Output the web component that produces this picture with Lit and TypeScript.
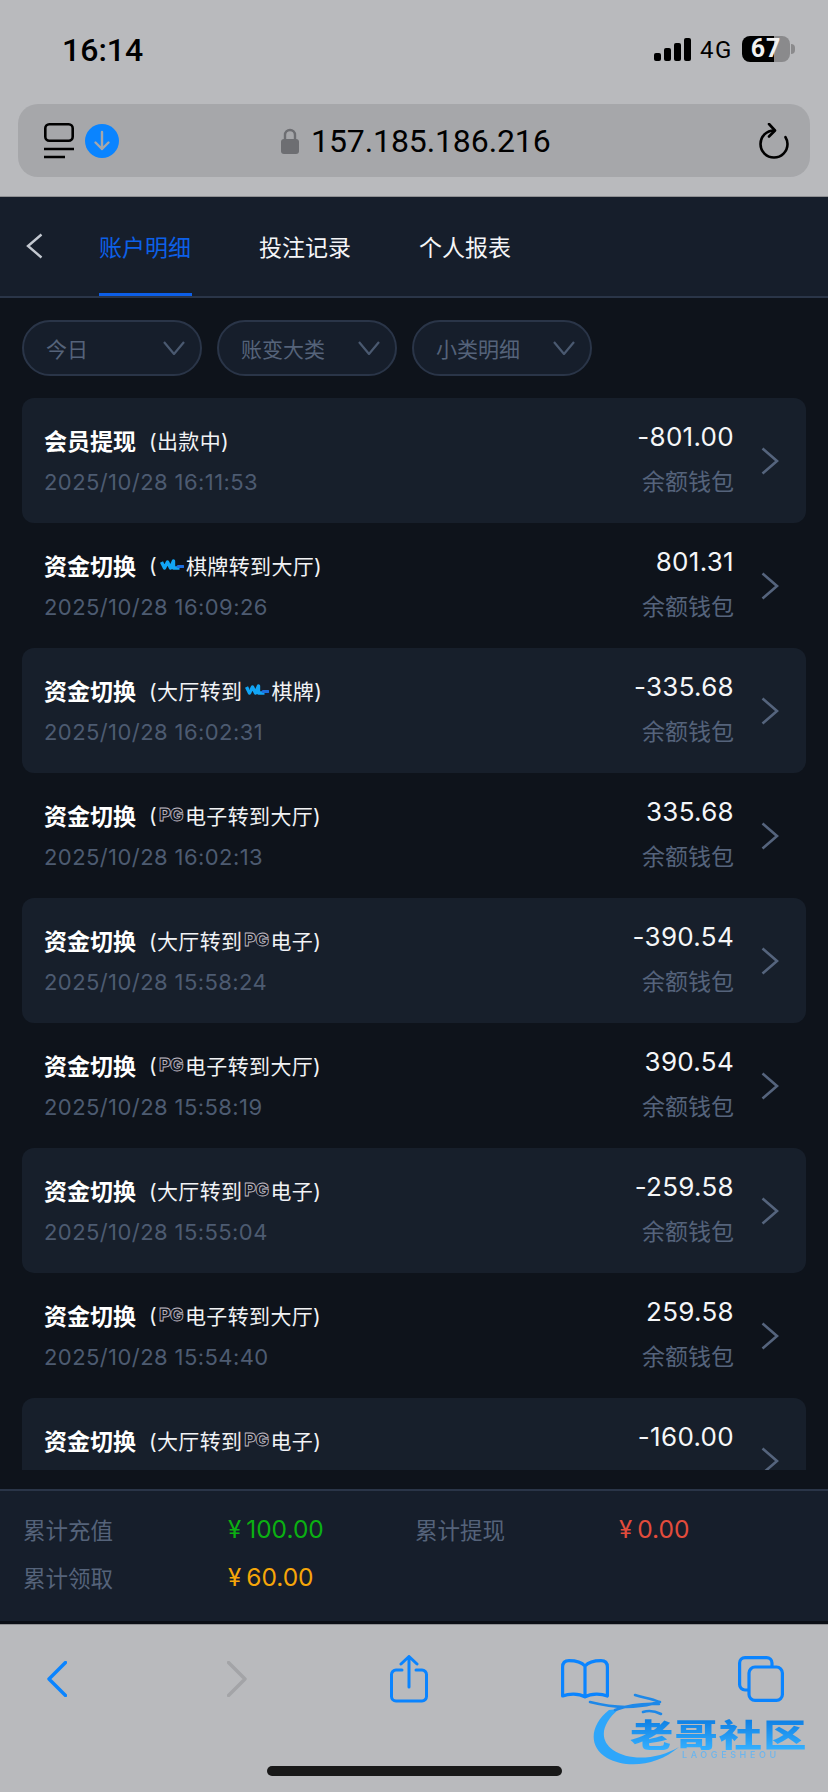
import { LitElement, html, css, svg } from "lit";
import { customElement } from "lit/decorators.js";

type Row = { t: string; sub: any; date: string; amt: string };

const wl = html`<svg class="wl" viewBox="0 0 24 14"><path d="M1.500 4l3 6 3-6 3 6 3-7v7h6" fill="none" stroke="#12a5f5" stroke-width="3.400" stroke-linejoin="round"/><path d="M18 8.500h5" stroke="#1e6fe0" stroke-width="3" stroke-linecap="round"/></svg>`;
const pg = html`<span class="pg">PG</span>`;
const toHall = (logo: any, name: string) => html`(${logo}${name}转到大厅)`;
const fromHall = (logo: any, name: string) => html`(大厅转到${logo}${name})`;

const rows: Row[] = [
  { t: "会员提现", sub: html`(出款中)`, date: "2025/10/28 16:11:53", amt: "-801.00" },
  { t: "资金切换", sub: toHall(wl, "棋牌"), date: "2025/10/28 16:09:26", amt: "801.31" },
  { t: "资金切换", sub: fromHall(wl, "棋牌"), date: "2025/10/28 16:02:31", amt: "-335.68" },
  { t: "资金切换", sub: toHall(pg, "电子"), date: "2025/10/28 16:02:13", amt: "335.68" },
  { t: "资金切换", sub: fromHall(pg, "电子"), date: "2025/10/28 15:58:24", amt: "-390.54" },
  { t: "资金切换", sub: toHall(pg, "电子"), date: "2025/10/28 15:58:19", amt: "390.54" },
  { t: "资金切换", sub: fromHall(pg, "电子"), date: "2025/10/28 15:55:04", amt: "-259.58" },
  { t: "资金切换", sub: toHall(pg, "电子"), date: "2025/10/28 15:54:40", amt: "259.58" },
  { t: "资金切换", sub: fromHall(pg, "电子"), date: "2025/10/28 15:54:36", amt: "-160.00" },
];

const chev = html`<svg class="chev" viewBox="0 0 18 28"><path d="M1.500 1.500L16 14 1.500 26.500" fill="none" stroke="#55647d" stroke-width="2.600"/></svg>`;
const caret = html`<svg class="caret" viewBox="0 0 22 14"><path d="M1 1l10 12L21 1" fill="none" stroke="#4a5970" stroke-width="2.200"/></svg>`;

@customElement("app-root")
export class AppRoot extends LitElement {
  static styles = css`
    :host { display: block; width: 828px; height: 1792px; overflow: hidden; position: relative; background: #0e131b;
      font-family: Inter, "Noto Sans CJK SC", sans-serif; }
    .top { background: #b9babd; height: 197px; box-sizing: border-box; border-bottom: 1px solid #8f9093; }
    .status { height: 104px; display: flex; align-items: flex-start; padding-left: 62px; color: #000; }
    .time { font: 500 32px/36px Roboto, Inter, sans-serif; margin-top: 32px; width: 592px; }
    .signal { width: 37px; height: 23px; margin-top: 38px; }
    .net { font: 400 24px/26px Roboto, Inter, sans-serif; margin: 37px 0 0 9px; width: 32px; letter-spacing: 1.500px; }
    .batt { width: 48px; height: 26px; margin: 36px 0 0 10px; border-radius: 8px;
      background: linear-gradient(90deg, #000 0 32px, #8a8a8c 32px); color: #f1f1f1;
      font: 700 25px/26px Roboto, Inter, sans-serif; text-align: center; letter-spacing: 1px; }
    .nub { width: 4px; height: 10px; margin: 44px 0 0 1px; background: #8a8a8c; border-radius: 0 4px 4px 0; }
    .url { margin: 0 18px; height: 73px; border-radius: 20px; background: #a6a7aa; display: flex; align-items: center; padding-left: 26px; color: #000; }
    .tabsicon { width: 30px; height: 36px; }
    .dl { width: 34px; height: 34px; margin-left: 11px; }
    .lock { width: 18px; height: 26px; margin-left: 162px; }
    .addr { font: 400 32px/40px Roboto, Inter, sans-serif; margin-left: 12px; letter-spacing: -.1px; }
    .reload { width: 30px; height: 36px; margin-left: auto; margin-right: 21px; }

    .head { height: 101px; box-sizing: border-box; background: #161e2b; border-bottom: 2px solid #2a3548; display: flex; align-items: stretch; padding-left: 26px; }
    .back { width: 17px; height: 26px; margin-top: 36px; }
    .tab { font-size: 23px; line-height: 34px; color: #f4f5f7; width: 93px; margin-right: 67px; padding-top: 34px; position: relative; white-space: nowrap; }
    .tab.first { margin-left: 56px; }
    .tab.on { color: #0d60e8; }
    .tab.on::after { content: ""; position: absolute; left: 0; right: 0; bottom: 0; height: 3px; background: #0d5fe8; }

    .filters { display: flex; gap: 15px; padding: 22px 22px 22px; }
    .pill { width: 180px; height: 56px; box-sizing: border-box; border: 2px solid #2a3548; border-radius: 28px; background: #161e2b;
      display: flex; align-items: center; justify-content: space-between; padding: 0 15px 0 22px; color: #55637a; font-size: 21px; }
    .caret { width: 22px; height: 14px; }

    .list { margin: 0 22px; height: 1072px; overflow: hidden; }
    .row { height: 125px; box-sizing: border-box; display: flex; border-radius: 12px; padding: 0 27px 0 22px; }
    .row:nth-child(odd) { background: #171f2b; }
    .left { flex: 1; }
    .title { display: flex; align-items: center; height: 34px; margin-top: 25px; color: #fff; }
    .title b { font-size: 23px; font-weight: 700; width: 92px; white-space: nowrap; }
    .sub { font-size: 21px; margin-left: 13px; display: flex; align-items: center; color: #f2f3f5; letter-spacing: .35px; }
    .date { font-size: 22px; line-height: 28px; color: #4d5b71; margin-top: 11px; letter-spacing: .42px; }
    .right { text-align: right; }
    .amt { font-size: 26px; line-height: 34px; color: #f5f6f8; margin-top: 22px; letter-spacing: .3px; }
    .lbl { font-size: 23px; line-height: 30px; color: #55637b; margin-top: 13px; }
    .chev { width: 18px; height: 28px; margin: 49px 0 0 27px; flex: none; }
    .wl { width: 24px; height: 14px; margin: 0 2px 0 3px; }
    .pg { font: 800 18px/16px Inter, sans-serif; color: #10151e; -webkit-text-stroke: 0.8px #c4bfc8; width: 28px; text-align: center; letter-spacing: -.5px; }

    .foot { margin-top: 19px; height: 132px; box-sizing: border-box; background: #161e2b; border-top: 2px solid #2a3548;
      padding: 14px 0 0 23px; display: grid; grid-template-columns: 205px 187px 204px 1fr; grid-auto-rows: 48px; align-items: center; font-size: 22.500px; color: #55637a; }
    .val { font-size: 24.500px; }
    .y { font-size: 24px; margin-right: 5px; }
    .green { color: #0bb012; } .red { color: #e34c3c; } .orange { color: #f6a609; }
    .gap { height: 3px; background: #0a0e15; }

    .bar { background: #b9babd; height: 168px; border-top: 1px solid #8f9093; box-sizing: border-box; position: relative; }
    .tools { display: flex; align-items: center; height: 108px; padding: 0 0 0 47px; }
    .tools svg { display: block; flex: none; }
    .i-back { width: 20px; height: 36px; }
    .i-fwd { width: 20px; height: 36px; margin-left: 160px; }
    .i-share { width: 38px; height: 48px; margin-left: 143px; }
    .i-book { width: 48px; height: 40px; margin-left: 133px; }
    .i-tabs { width: 46px; height: 46px; margin-left: 129px; }
    .home { position: absolute; left: 267px; top: 141px; width: 295px; height: 10px; border-radius: 5px; background: #191919; }

    .mark { position: absolute; left: 585px; top: 1690px; width: 235px; height: 85px; filter: blur(.4px); }
    .mark svg { position: absolute; inset: 0; width: 235px; height: 85px; }
    .mark .zh { position: absolute; left: 45px; top: 25px; font: 900 36px/40px "Noto Sans CJK SC", sans-serif; letter-spacing: 1px; white-space: nowrap;
      transform: scale(1.2, .88); transform-origin: left top;
      background: linear-gradient(180deg, #0a78e0, #35b1ff); -webkit-background-clip: text; background-clip: text; color: transparent; }
    .mark .en { position: absolute; left: 97px; top: 60px; font: 500 9px/10px Inter, sans-serif; letter-spacing: 3.600px; color: #6bb5ee; white-space: nowrap; }
  `;

  render() {
    const blue = "#0a84ff";
    return html`
      <div class="top">
        <div class="status">
          <div class="time">16:14</div>
          <svg class="signal" viewBox="0 0 37 23" fill="#000">
            <rect x="0" y="15" width="7" height="8" rx="2"/><rect x="10" y="10" width="7" height="13" rx="2"/>
            <rect x="20" y="5" width="7" height="18" rx="2"/><rect x="30" y="0" width="7" height="23" rx="2"/>
          </svg>
          <div class="net">4G</div>
          <div class="batt">67</div>
          <div class="nub"></div>
        </div>
        <div class="url">
          <svg class="tabsicon" viewBox="0 0 30 36" fill="none" stroke="#000" stroke-width="2.600">
            <rect x="1.300" y="1.300" width="27.400" height="16.400" rx="4"/>
            <path d="M0 26h30M0 34h21"/>
          </svg>
          <svg class="dl" viewBox="0 0 34 34">
            <circle cx="17" cy="17" r="17" fill="#0a84ff"/>
            <path d="M17 8v17M10.500 18.500L17 25l6.500-6.500" fill="none" stroke="#a6a7aa" stroke-width="2.400" stroke-linecap="round" stroke-linejoin="round"/>
          </svg>
          <svg class="lock" viewBox="0 0 18 26">
            <path d="M4 12V7a5 5 0 0 1 10 0v5" fill="none" stroke="#6d6e72" stroke-width="2.400"/>
            <rect x="0" y="11" width="18" height="15" rx="3" fill="#6d6e72"/>
          </svg>
          <div class="addr">157.185.186.216</div>
          <svg class="reload" viewBox="0 0 30 36" fill="none" stroke="#000" stroke-width="2.600" stroke-linecap="round" stroke-linejoin="round">
            <path d="M15 7.500A13.500 13.500 0 1 0 28.500 21c0-2.500-.7-4.800-2-6.800"/>
            <path d="M10 1l6 6.500-6 6"/>
          </svg>
        </div>
      </div>
      <div class="head">
        <svg class="back" viewBox="0 0 17 26"><path d="M15.500 1.500L2 13l13.500 11.500" fill="none" stroke="#c3c8d0" stroke-width="2.400"/></svg>
        <div class="tab first on">账户明细</div>
        <div class="tab">投注记录</div>
        <div class="tab">个人报表</div>
      </div>
      <div class="filters">
        <div class="pill"><span>今日</span>${caret}</div>
        <div class="pill"><span>账变大类</span>${caret}</div>
        <div class="pill"><span>小类明细</span>${caret}</div>
      </div>
      <div class="list">
        ${rows.map(
          (r) => html`<div class="row">
            <div class="left">
              <div class="title"><b>${r.t}</b><span class="sub">${r.sub}</span></div>
              <div class="date">${r.date}</div>
            </div>
            <div class="right">
              <div class="amt">${r.amt}</div>
              <div class="lbl">余额钱包</div>
            </div>
            ${chev}
          </div>`
        )}
      </div>
      <div class="foot">
        <div>累计充值</div><div class="val green"><span class="y">¥</span>100.00</div>
        <div>累计提现</div><div class="val red"><span class="y">¥</span>0.00</div>
        <div>累计领取</div><div class="val orange"><span class="y">¥</span>60.00</div>
      </div>
      <div class="gap"></div>
      <div class="bar">
        <div class="tools">
          <svg class="i-back" viewBox="0 0 20 36"><path d="M18.500 1.500L2 18l16.500 16.500" fill="none" stroke=${blue} stroke-width="3.400" stroke-linecap="round" stroke-linejoin="round"/></svg>
          <svg class="i-fwd" viewBox="0 0 20 36"><path d="M1.500 1.500L18 18 1.500 34.500" fill="none" stroke="#a3a4a7" stroke-width="3.400" stroke-linecap="round" stroke-linejoin="round"/></svg>
          <svg class="i-share" viewBox="0 0 38 48" fill="none" stroke=${blue} stroke-width="3" stroke-linecap="round" stroke-linejoin="round">
            <path d="M12 15H6a4.500 4.500 0 0 0-4.500 4.500v22A4.500 4.500 0 0 0 6 46h26a4.500 4.500 0 0 0 4.500-4.500v-22A4.500 4.500 0 0 0 32 15h-6"/>
            <path d="M19 32V2M11 9l8-7.500L27 9"/>
          </svg>
          <svg class="i-book" viewBox="0 0 48 40" fill="none" stroke=${blue} stroke-width="3.200" stroke-linejoin="round">
            <path d="M24 7C20 2.500 14 1.600 8 1.600 4 1.600 1.600 4 1.600 8v29c6-2.500 16-3 22.400 1 6.400-4 16.400-3.500 22.400-1V8c0-4-2.400-6.400-6.400-6.400C34 1.600 28 2.500 24 7zM24 7v31"/>
          </svg>
          <svg class="i-tabs" viewBox="0 0 46 46" fill="none" stroke=${blue} stroke-width="3.200">
            <path d="M11 34H7a5.400 5.400 0 0 1-5.400-5.400V7A5.400 5.400 0 0 1 7 1.600h21.600A5.400 5.400 0 0 1 34 7v4"/>
            <rect x="11" y="11" width="33.400" height="33.400" rx="6"/>
          </svg>
        </div>
        <div class="home"></div>
      </div>
      <div class="mark">
        <svg viewBox="0 0 235 85">
          ${svg`<path d="M24 20C6 34 2 56 22 68 42 79 72 76 94 57 72 70 44 71 28 60 14 50 16 34 34 19Z" fill="#2ea6fa"/>
          <path d="M5 12c20 5 36 6 50 4 10-1 14-3 20-4M30 20c14-5 28-7 44-6M50 5c8 3 16 3 24 7M58 22c6-2 12-1 18 2" fill="none" stroke="#1e88e8" stroke-width="2.600" stroke-linecap="round"/>`}
        </svg>
        <div class="zh">老哥社区</div>
        <div class="en">LAOGESHEOU</div>
      </div>
    `;
  }
}
